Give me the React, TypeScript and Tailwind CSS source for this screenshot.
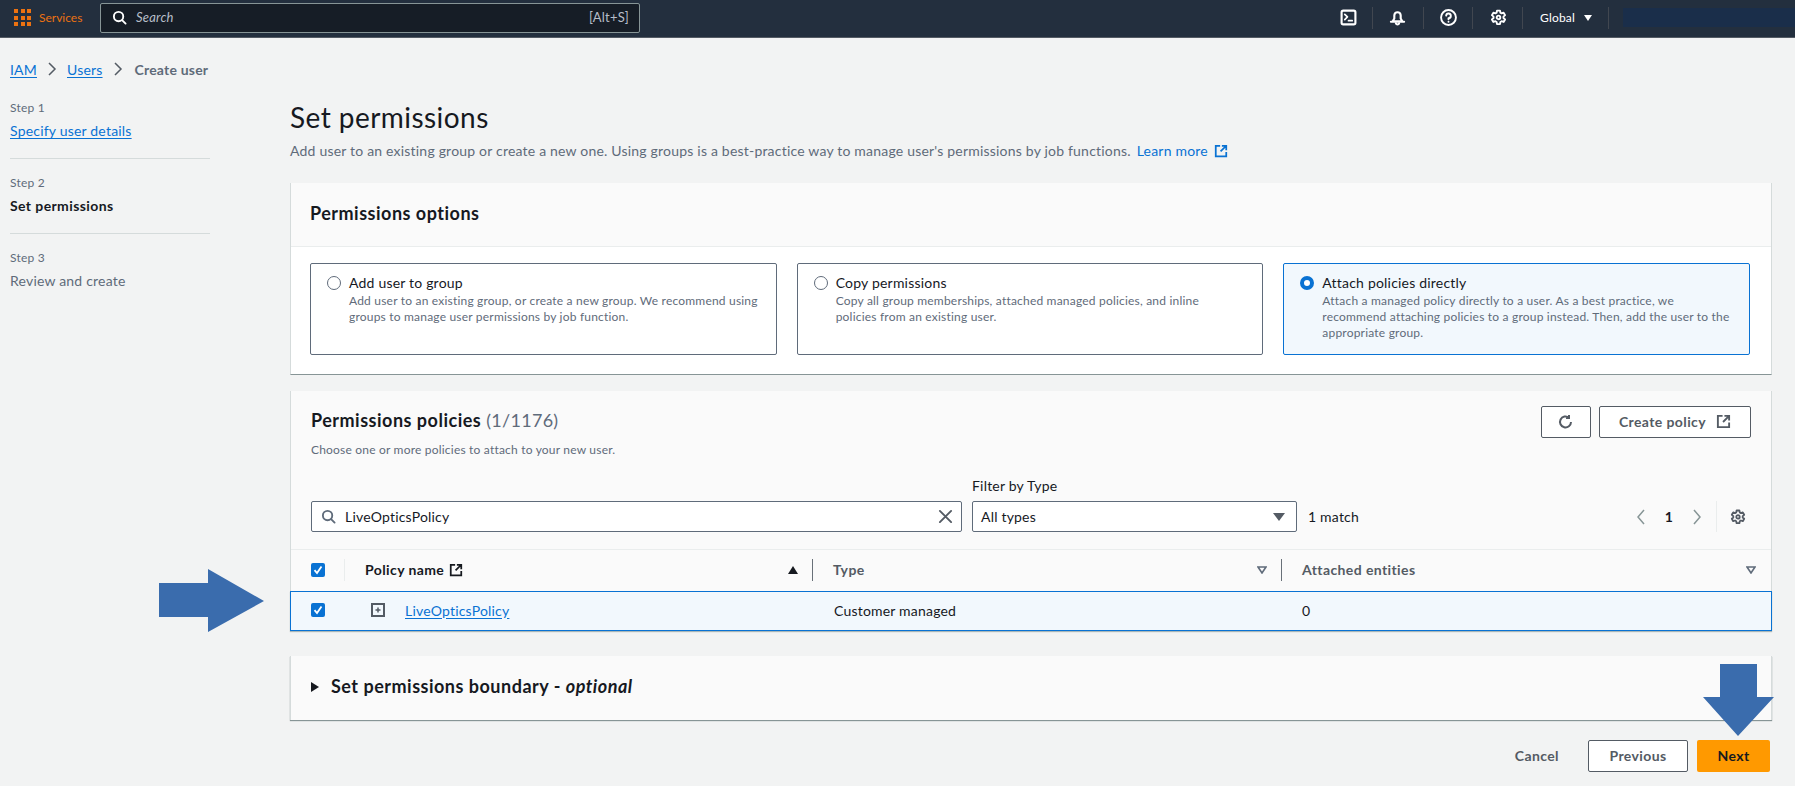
import type { ReactNode } from 'react'

const LINK = 'text-[#0972d3] underline underline-offset-2'

function Icon({ size = 16, stroke = 2, className = '', children }: { size?: number; stroke?: number; className?: string; children: ReactNode }) {
  return (
    <svg
      width={size}
      height={size}
      viewBox="0 0 16 16"
      fill="none"
      stroke="currentColor"
      strokeWidth={stroke}
      strokeLinecap="round"
      strokeLinejoin="round"
      className={`shrink-0 ${className}`}
    >
      {children}
    </svg>
  )
}

function ExternalIcon({ size = 14, className = '' }: { size?: number; className?: string }) {
  return (
    <Icon size={size} className={className}>
      <path d="M7 2H2v12h12V9" strokeLinecap="butt" strokeLinejoin="miter" />
      <path d="M9 2h5v5M14 2L7.5 8.5" strokeLinecap="butt" strokeLinejoin="miter" />
    </Icon>
  )
}

function Gear({ size = 18, className = '' }: { size?: number; className?: string }) {
  return (
    <Icon size={size} className={className} stroke={1.8}>
      <path d="M6.6 1.5h2.8l.4 2 1.1.6 1.9-.7 1.4 2.4-1.5 1.4v1.3l1.5 1.3-1.4 2.4-1.9-.7-1.1.7-.4 2H6.6l-.4-2-1.1-.7-1.9.7-1.4-2.4 1.5-1.3V7.2L1.8 5.8l1.4-2.4 1.9.7 1.1-.6z" />
      <circle cx="8" cy="7.9" r="1.7" />
    </Icon>
  )
}

function Radio({ checked }: { checked?: boolean }) {
  return checked ? (
    <span className="mt-[3px] h-[14px] w-[14px] shrink-0 rounded-full border-[4px] border-[#0972d3] bg-white" />
  ) : (
    <span className="mt-[3px] h-[14px] w-[14px] shrink-0 rounded-full border border-[#5f6b7a] bg-white" />
  )
}

function Checkbox() {
  return (
    <span className="flex h-[14px] w-[14px] shrink-0 items-center justify-center rounded-[2px] bg-[#0972d3]">
      <svg width="10" height="10" viewBox="0 0 10 10" fill="none" stroke="white" strokeWidth="1.8">
        <path d="M1.5 5.2L4 8l4.5-6.5" />
      </svg>
    </span>
  )
}

function Tile({ title, text, active }: { title: string; text: ReactNode; active?: boolean }) {
  return (
    <div
      className={`flex h-[92px] flex-1 gap-2 rounded-[2px] border px-[16px] pt-[9px] ${
        active ? 'border-[#0972d3] bg-[#f2f8fd]' : 'border-[#5f6b7a] bg-white'
      }`}
    >
      <Radio checked={active} />
      <div>
        <p className="text-[14px] leading-[20px] text-[#16191f]">{title}</p>
        <p className="text-[12px] leading-[16px] text-[#5f6b7a]">{text}</p>
      </div>
    </div>
  )
}

function FilterCaret({ className = '' }: { className?: string }) {
  return (
    <svg width="10" height="8" viewBox="0 0 10 8" className={className} fill="none" stroke="#5f6b7a" strokeWidth="1.6">
      <path d="M1 1h8L5 7z" />
    </svg>
  )
}

export default function App() {
  return (
    <div
      className="relative h-[786px] w-[1795px] overflow-hidden bg-[#f2f3f3] text-[14px] tracking-[0.2px] text-[#16191f]"
      style={{ fontFamily: '"Lato", "Liberation Sans", sans-serif' }}
    >
      <header className="flex h-[38px] items-center border-b border-[#545b64] bg-[#232f3e] pb-[2px] text-white">
        <div className="ml-[14px] grid shrink-0 grid-cols-3 gap-[2.5px]">
          {Array.from({ length: 9 }).map((_, i) => (
            <span key={i} className="h-[4px] w-[4px] bg-[#ec7211]" />
          ))}
        </div>
        <span className="ml-[8px] w-[47px] shrink-0 text-[12px] tracking-normal text-[#ec7211]">Services</span>
        <div className="ml-[14px] flex h-[30px] w-[540px] shrink-0 items-center rounded-[2px] border border-[#879596] bg-[#161d26] pl-[11px] pr-[10px]">
          <Icon size={15} className="text-white">
            <circle cx="7" cy="7" r="5" />
            <path d="M11 11l3.5 3.5" />
          </Icon>
          <span className="ml-[9px] flex-1 text-[13px] italic text-[#b6bec9]">Search</span>
          <span className="text-[13px] text-[#b6bec9]">[Alt+S]</span>
        </div>
        <div className="ml-[699px] flex shrink-0 items-center">
          <Icon size={17} className="ml-[1px]">
            <rect x="1.5" y="1.5" width="13" height="13" rx="1.5" />
            <path d="M4.5 5L7 7.5 4.5 10M8 11h3.5" strokeWidth="1.6" />
          </Icon>
          <span className="ml-[15px] h-[22px] w-px bg-[#414750]" />
          <Icon size={17} className="ml-[16px]">
            <path d="M3.5 11.5L5 9V6a3 3 0 0 1 6 0v3l1.5 2.5zM1.8 12h12.4" />
            <path d="M6.5 13.5a1.6 1.6 0 0 0 3 0" />
          </Icon>
          <span className="ml-[17px] h-[22px] w-px bg-[#414750]" />
          <Icon size={17} className="ml-[16px]" stroke={1.8}>
            <circle cx="8" cy="8" r="7" />
            <path d="M5.8 6.2A2.2 2.2 0 1 1 8 8.6v1.1M8 12v.1" />
          </Icon>
          <span className="ml-[15px] h-[22px] w-px bg-[#414750]" />
          <Gear size={17} className="ml-[17px]" />
          <span className="ml-[15px] h-[22px] w-px bg-[#414750]" />
          <span className="ml-[17px] w-[37px] text-[12px]">Global</span>
          <span className="ml-[7px] h-0 w-0 border-x-[4px] border-t-[6px] border-x-transparent border-t-white" />
          <span className="ml-[16px] h-[22px] w-px bg-[#414750]" />
          <span className="ml-[14px] h-[19px] w-[173px] bg-[#1a2e4a]" />
        </div>
      </header>

      <div className="flex">
        <aside className="w-[290px] shrink-0 pl-[10px]">
          <nav className="mt-[21px] flex h-[20px] items-center text-[14px]">
            <span className={LINK}>IAM</span>
            <svg width="12" height="14" viewBox="0 0 12 14" fill="none" stroke="#545b64" strokeWidth="1.5" className="mx-[9px]">
              <path d="M3 1l6 6-6 6" />
            </svg>
            <span className={LINK}>Users</span>
            <svg width="12" height="14" viewBox="0 0 12 14" fill="none" stroke="#545b64" strokeWidth="1.5" className="ml-[9px] mr-[11px]">
              <path d="M3 1l6 6-6 6" />
            </svg>
            <span className="font-bold text-[#5f6b7a]">Create user</span>
          </nav>
          <div className="w-[200px]">
            <p className="mt-[21px] text-[12px] leading-[16px] text-[#5f6b7a]">Step 1</p>
            <p className={`mt-[5px] leading-[20px] ${LINK}`}>Specify user details</p>
            <div className="mt-[17px] h-px bg-[#d5dbdb]" />
            <p className="mt-[16px] text-[12px] leading-[16px] text-[#5f6b7a]">Step 2</p>
            <p className="mt-[5px] font-bold leading-[20px] tracking-[0.4px]">Set permissions</p>
            <div className="mt-[17px] h-px bg-[#d5dbdb]" />
            <p className="mt-[16px] text-[12px] leading-[16px] text-[#5f6b7a]">Step 3</p>
            <p className="mt-[5px] leading-[20px] text-[#5f6b7a]">Review and create</p>
          </div>
        </aside>

        <main className="w-[1482px]">
          <h1 className="mt-[62px] text-[28px] leading-[34px] tracking-[0.45px]">Set permissions</h1>
          <p className="mt-[7px] flex items-center leading-[20px] text-[#5f6b7a]">
            Add user to an existing group or create a new one. Using groups is a best-practice way to manage user's permissions by job functions.
            <span className="ml-[6px] text-[#0972d3]">Learn more</span>
            <ExternalIcon className="ml-[6px] text-[#0972d3]" />
          </p>

          <section className="mt-[22px] h-[192px] border-x border-b border-x-[#d5dbdb] border-b-[#879596] bg-white">
            <div className="flex h-[64px] items-center border-b border-[#eaeded] bg-[#fafafa] pb-[2px] pl-[19px] text-[18px] font-bold tracking-[0.5px]">
              Permissions options
            </div>
            <div className="mt-[16px] flex gap-[20px] pl-[19px] pr-[21px]">
              <Tile
                title="Add user to group"
                text="Add user to an existing group, or create a new group. We recommend using groups to manage user permissions by job function."
              />
              <Tile
                title="Copy permissions"
                text={<>Copy all group memberships, attached managed policies, and inline<br />policies from an existing user.</>}
              />
              <Tile
                active
                title="Attach policies directly"
                text="Attach a managed policy directly to a user. As a best practice, we recommend attaching policies to a group instead. Then, add the user to the appropriate group."
              />
            </div>
          </section>

          <section className="mt-[16px] h-[239px] border-x border-[#d5dbdb] bg-[#fafafa]">
            <div className="flex justify-between pl-[20px] pr-[20px] pt-[15px]">
              <div>
                <h2 className="text-[18px] font-bold leading-[28px] tracking-[0.5px]">
                  Permissions policies <span className="font-normal tracking-[0.3px] text-[#5f6b7a]">(1/1176)</span>
                </h2>
                <p className="mt-[8px] text-[12px] leading-[16px] text-[#5f6b7a]">Choose one or more policies to attach to your new user.</p>
              </div>
              <div className="flex gap-[8px]">
                <button type="button" className="flex h-[32px] w-[50px] items-center justify-center rounded-[2px] border border-[#545b64] bg-white text-[#545b64]">
                  <Icon size={16}>
                    <path d="M13 8a5.5 5.5 0 1 1-2-4.3M11 1v3H8" strokeLinecap="butt" strokeLinejoin="miter" />
                  </Icon>
                </button>
                <button type="button" className="flex h-[32px] w-[152px] items-center justify-center gap-[10px] rounded-[2px] border border-[#545b64] bg-white pb-[1px] font-bold tracking-[0.4px] text-[#545b64]">
                  Create policy
                  <ExternalIcon size={15} />
                </button>
              </div>
            </div>

            <div className="mt-[18px] flex items-end pl-[20px] pr-[25px]">
              <div className="flex h-[31px] w-[651px] items-center rounded-[2px] border border-[#5f6b7a] bg-white pl-[9px] pr-[8px]">
                <Icon size={15} className="text-[#5f6b7a]">
                  <circle cx="7" cy="7" r="5" />
                  <path d="M11 11l3.5 3.5" />
                </Icon>
                <span className="ml-[9px] flex-1">LiveOpticsPolicy</span>
                <Icon size={15} className="text-[#545b64]">
                  <path d="M2 2l12 12M14 2L2 14" />
                </Icon>
              </div>
              <div className="ml-[10px] w-[325px]">
                <p className="mb-[5px] leading-[20px]">Filter by Type</p>
                <div className="flex h-[31px] items-center justify-between rounded-[2px] border border-[#5f6b7a] bg-white pl-[8px] pr-[11px]">
                  <span>All types</span>
                  <span className="h-0 w-0 border-x-[6px] border-t-[8px] border-x-transparent border-t-[#545b64]" />
                </div>
              </div>
              <span className="ml-[11px] h-[31px] leading-[31px]">1 match</span>
              <div className="ml-auto flex h-[31px] items-center">
                <svg width="10" height="16" viewBox="0 0 10 16" fill="none" stroke="#879596" strokeWidth="1.5"><path d="M8 1L2 8l6 7" /></svg>
                <span className="mx-[19px] font-bold">1</span>
                <svg width="10" height="16" viewBox="0 0 10 16" fill="none" stroke="#879596" strokeWidth="1.5"><path d="M2 1l6 7-6 7" /></svg>
                <span className="ml-[14px] h-[31px] w-px bg-[#eaeded]" />
                <Gear size={16} className="ml-[13px] text-[#545b64]" />
              </div>
            </div>

            <div className="mt-[17px] flex h-[42px] items-center border-t border-[#eaeded] pb-[2px]">
              <div className="flex w-[53px] justify-start pl-[20px]"><Checkbox /></div>
              <span className="h-[22px] w-px bg-[#eaeded]" />
              <div className="flex flex-1 items-center pl-[20px] pr-[14px]">
                <span className="font-bold tracking-[0.4px]">Policy name</span>
                <ExternalIcon className="ml-[5px]" />
                <span className="ml-auto h-0 w-0 border-x-[5px] border-b-[8px] border-x-transparent border-b-[#16191f]" />
              </div>
              <span className="h-[22px] w-px bg-[#687078]" />
              <div className="flex w-[468px] items-center pl-[20px] pr-[14px]">
                <span className="font-bold tracking-[0.4px] text-[#545b64]">Type</span>
                <FilterCaret className="ml-auto" />
              </div>
              <span className="h-[22px] w-px bg-[#687078]" />
              <div className="flex w-[489px] items-center pl-[20px] pr-[15px]">
                <span className="font-bold tracking-[0.4px] text-[#545b64]">Attached entities</span>
                <FilterCaret className="ml-auto" />
              </div>
            </div>

            <div className="-mx-px flex h-[40px] items-center border border-[#0972d3] bg-[#f2f8fd] pb-[2px] shadow-[0_1px_1px_#aab7b8]">
              <div className="w-[79px] pl-[20px]"><Checkbox /></div>
              <svg width="16" height="16" viewBox="0 0 16 16" fill="none" stroke="#545b64" strokeWidth="2" className="shrink-0">
                <rect x="2" y="2" width="12" height="12" />
                <path d="M8 5.5v5M5.5 8h5" strokeWidth="1.5" />
              </svg>
              <span className="ml-[19px] w-[429px]"><span className={LINK}>LiveOpticsPolicy</span></span>
              <span className="w-[468px]">Customer managed</span>
              <span>0</span>
            </div>
          </section>

          <section className="mt-[26px] flex h-[64px] items-center gap-[12px] border-x border-[#d5dbdb] bg-[#fafafa] pb-[3px] pl-[20px] shadow-[0_1px_1px_#879596]">
            <span className="h-0 w-0 border-y-[5px] border-l-[8px] border-y-transparent border-l-[#16191f]" />
            <span className="text-[18px] font-bold tracking-[0.5px]">
              Set permissions boundary - <em>optional</em>
            </span>
          </section>

          <footer className="mt-[20px] flex items-center pr-[2px]">
            <span className="ml-auto pb-[2px] font-bold tracking-[0.4px] text-[#545b64]">Cancel</span>
            <button type="button" className="ml-[29px] h-[32px] w-[100px] rounded-[2px] border border-[#545b64] bg-white pb-[2px] font-bold tracking-[0.4px] text-[#545b64]">Previous</button>
            <button type="button" className="ml-[9px] h-[32px] w-[73px] rounded-[2px] bg-[#ff9900] pb-[2px] font-bold tracking-[0.4px] text-[#16191f]">Next</button>
          </footer>
        </main>
      </div>

      {/* annotation arrows on top of the screenshot */}
      <svg width="108" height="65" viewBox="0 0 108 65" className="absolute left-[158px] top-[568px]" fill="#3a6cad">
        <path d="M1 15h49V1l56 32-56 31V49H1z" />
      </svg>
      <svg width="73" height="74" viewBox="0 0 73 74" className="absolute left-[1702px] top-[663px]" fill="#3a6cad">
        <path d="M18 1h37v33h17L36 73 1 34h17z" />
      </svg>
    </div>
  )
}
